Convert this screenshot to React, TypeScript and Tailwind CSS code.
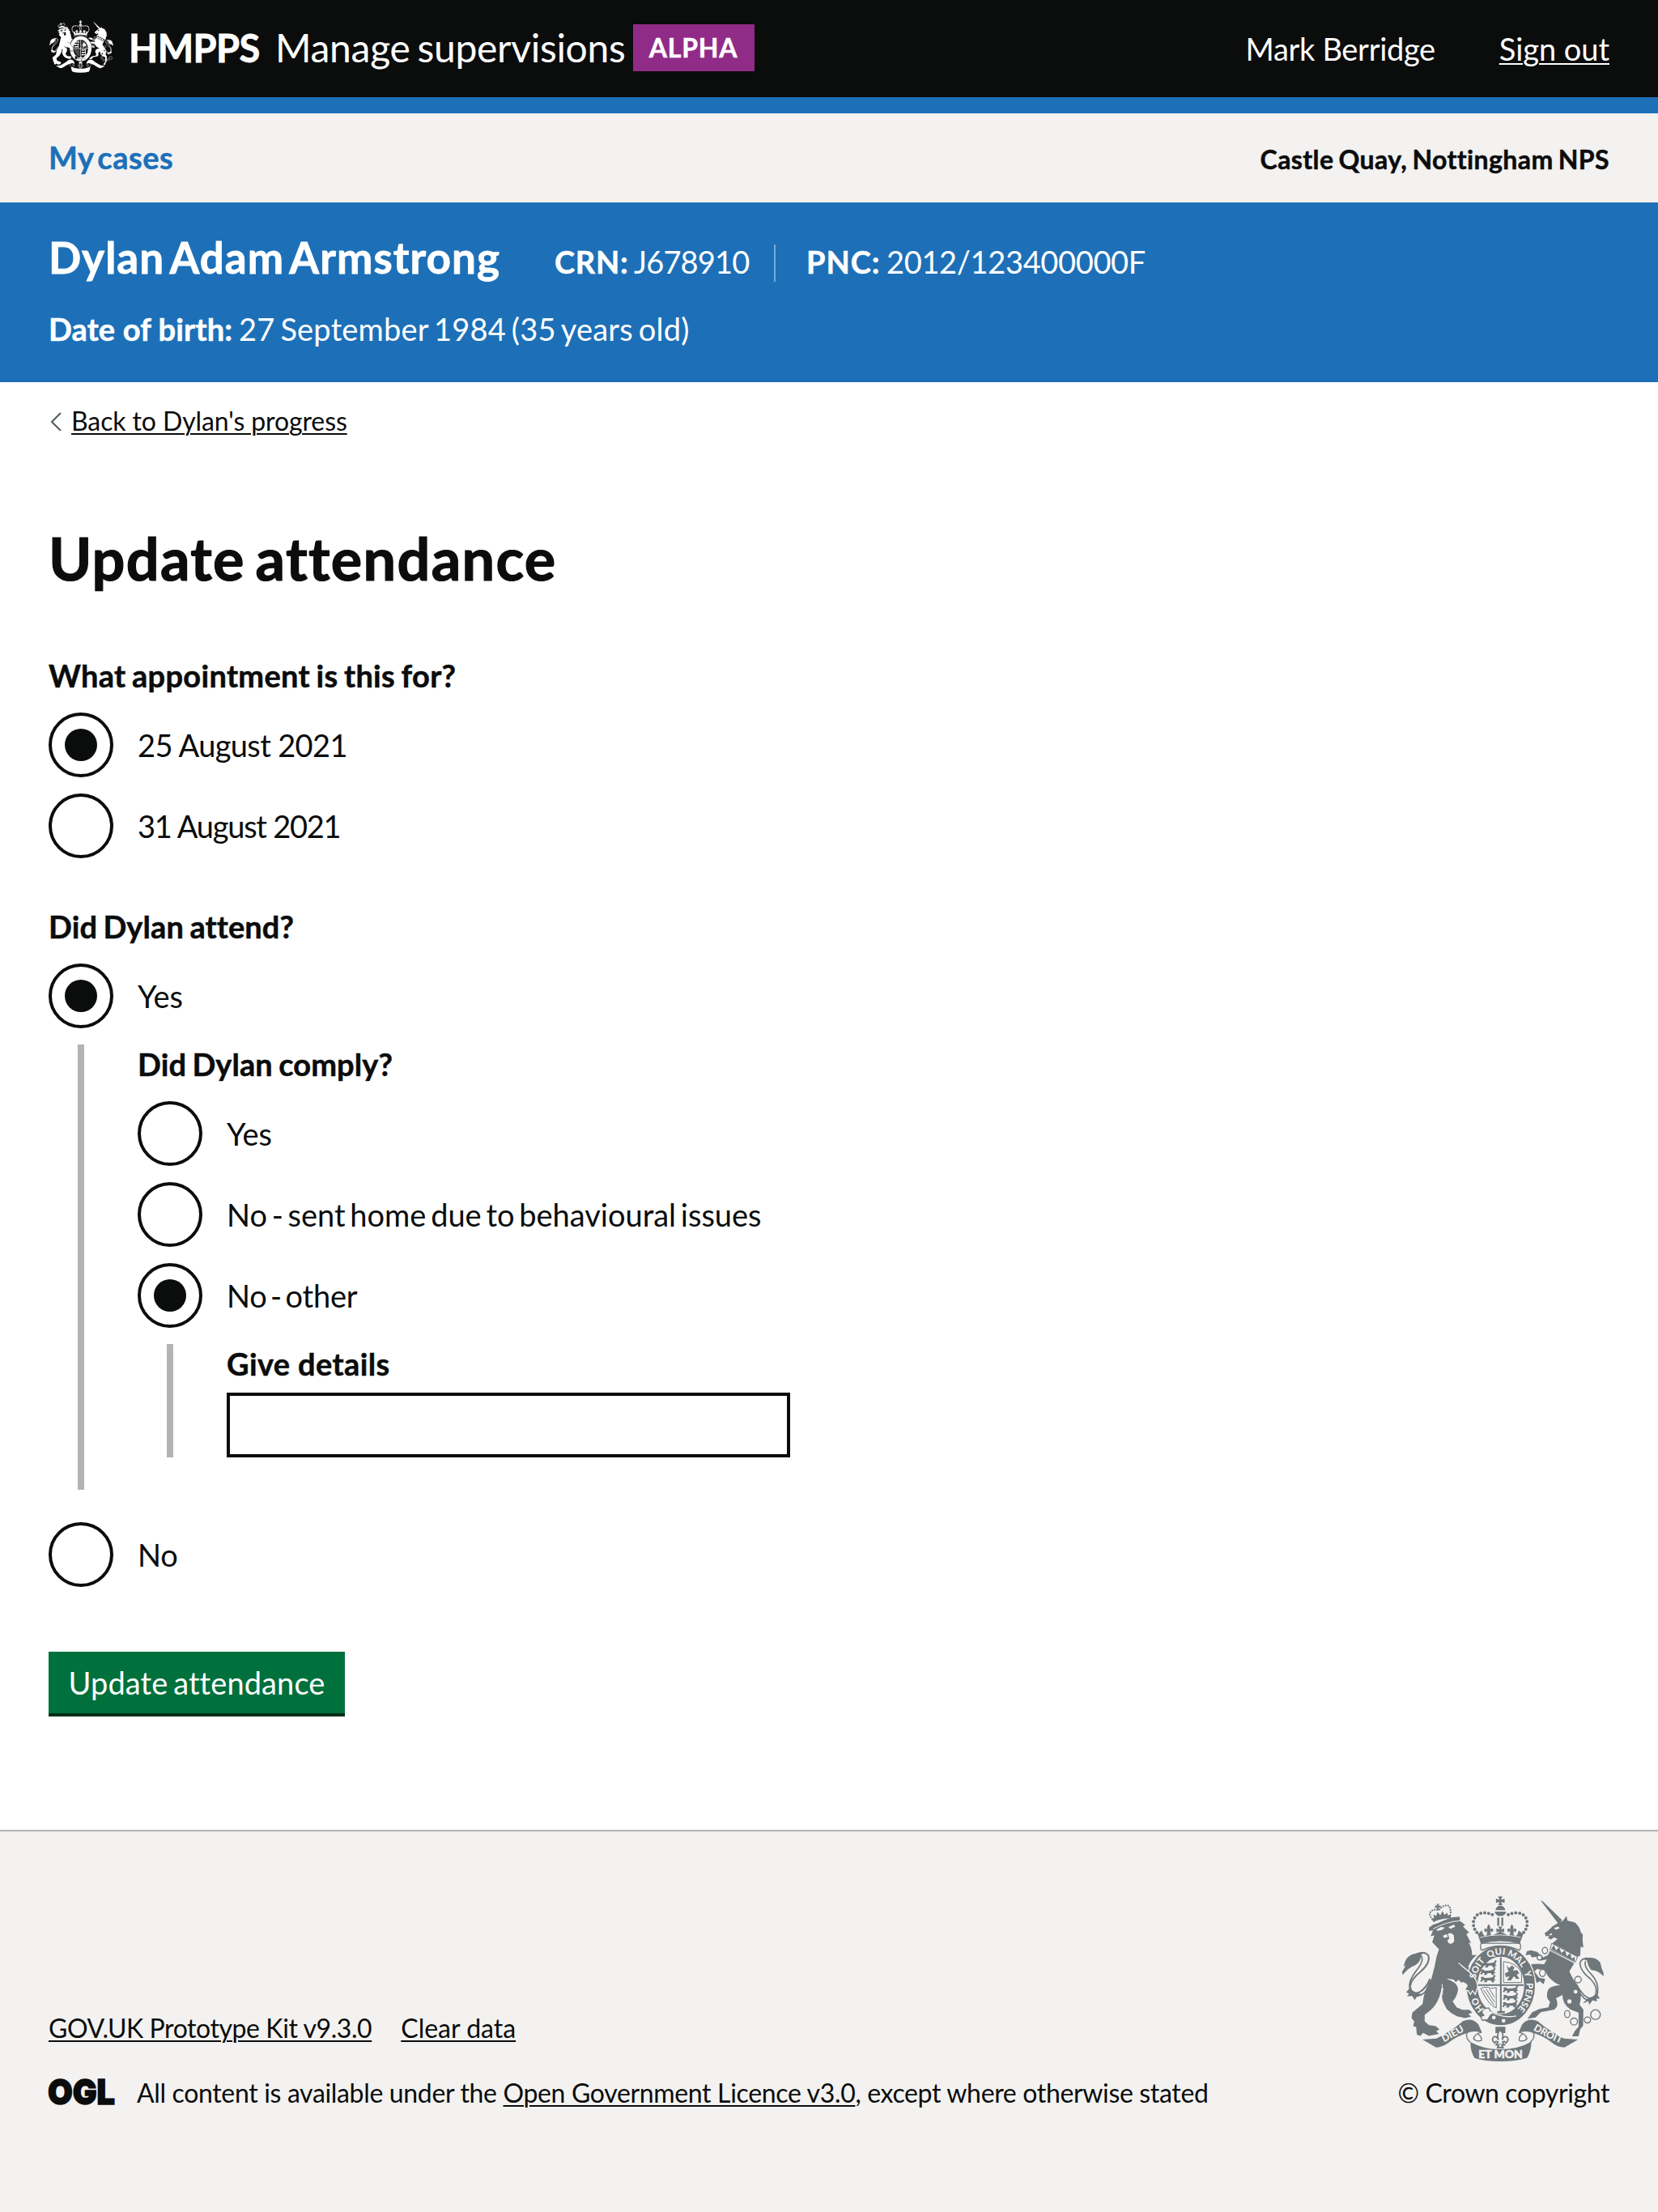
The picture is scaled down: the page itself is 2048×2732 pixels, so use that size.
import type { ReactNode } from "react";

function Fleur({ x, y, s }: { x: number; y: number; s: number }) {
  return (
    <path
      transform={`translate(${x} ${y}) scale(${s})`}
      d="M0-20Q9-9 4 3Q8-7 15-3Q20 4 12 10Q10 4 5 8L9 14H4L6 20H-6L-4 14H-9L-5 8Q-10 4-12 10Q-20 4-15-3Q-8-7-4 3Q-9-9 0-20Z"
    />
  );
}

function Cross({ x, y, s }: { x: number; y: number; s: number }) {
  return (
    <path
      transform={`translate(${x} ${y}) scale(${s})`}
      d="M-8-16H8L3-4L16-8V8L3 4L8 16H-8L-3 4L-16 8V-8L-3-4Z"
    />
  );
}

function Passant({ x, y }: { x: number; y: number }) {
  return (
    <path
      transform={`translate(${x} ${y})`}
      d="M-30-8L-22-11L-14-6L4-7L16-10L20-18L26-14L20-4L26 2L18 4L22 10H12L8 3L-4 3L-8 10H-18L-14 3L-22 2L-26 9L-32 5L-27-1Z"
    />
  );
}

const ribbonEnd =
  "M172 598L224 594Q285 562 322 529Q358 515 380 542L393 572Q362 562 338 574Q300 585 268 610Q248 627 222 627Z";
const ribbonFold = "M338 572Q330 592 350 608M391 571Q366 576 362 594Q370 606 390 602Q394 586 378 578";

function RoyalArms({ className, ink, ground, motto }: { className: string; ink: string; ground: string; motto?: boolean }) {
  return (
    <svg className={className} viewBox="95 65 752 614" fill={ink} aria-hidden="true">
      {/* ribbon */}
      <path d={ribbonEnd} />
      <path d={ribbonFold} fill="none" stroke={ink} strokeWidth="4" />
      <g transform="matrix(-1 0 0 1 922 0)">
        <path d={ribbonEnd} />
        <path d={ribbonFold} fill="none" stroke={ink} strokeWidth="4" />
      </g>
      <path d="M350 607Q400 635 461 634Q528 634 577 605Q575 645 560 666Q516 679 461 679Q404 679 366 667Q350 645 350 607Z" />

      {/* lion */}
      <path d="M196 182L212 170L226 166L262 151L284 143L310 141L311 157L331 172L322 177L345 200L335 206L353 240L343 236Q357 260 356 284L374 283Q352 300 342 326L354 348Q372 372 375 400L366 426L357 413L350 425L343 414L333 413L340 398L330 388L322 380L318 388L306 376L296 384L286 374L268 372L262 373Q300 384 304 408Q303 435 284 456L299 478L320 487L346 487L357 498L342 503L353 513L330 518L300 511L280 500L262 485L248 458Q240 435 250 408L243 405Q235 460 200 490L180 506L180 530L196 544L220 547L235 560L223 567L233 577L196 584L174 573L164 584L151 580L148 551L137 548L141 530L131 518L134 498L150 484L172 466Q178 408 205 372L216 330L224 290L233 262L208 236L216 210L202 214L211 192L196 194Z" />
      <g fill={ground}>
        <path d="M222 190L240 179L256 182L244 190L230 194ZM268 180L288 170L294 178L276 186Z" />
        <path d="M266 206Q278 196 288 210L290 232Q280 248 268 238L264 228L272 222Z" />
        <path d="M248 212L262 206L266 216L252 220Z" />
      </g>
      <path fill="none" stroke={ground} strokeWidth="3" d="M245 392L246 430M212 186Q260 160 312 156" />
      <path d="M207 150Q240 130 276 136L279 147Q240 146 212 161Z" />
      <path fill="none" stroke={ink} strokeWidth="7" strokeLinecap="round" strokeDasharray="0 9.5" d="M208 150Q190 128 208 118Q220 112 232 118Q246 98 266 99Q280 108 275 136" />
      <Cross x={229} y={104} s={0.65} />
      <path d="M214 146L213 132L222 139L228 124L238 136L246 120L254 134L264 126L266 140Z" />
      <path fill="none" stroke={ink} strokeWidth="6" d="M150 280Q180 268 194 286Q202 312 165 345Q128 375 126 400Q130 432 160 422Q185 408 200 372" />
      <path fill="none" stroke={ink} strokeWidth="5" d="M164 284Q182 300 150 340Q118 380 124 410Q134 440 166 432Q190 420 204 385" />
      <path d="M176 275Q122 274 108 306L101 326L110 322L96 346L98 358Q120 330 146 321Q166 308 166 285Z" />
      <path d="M124 408L111 422L122 427L114 437L133 436L143 451L150 440L176 430L148 425Z" />

      {/* unicorn */}
      <path d="M611 81L618 83L691 154L677 167Z" />
      <path d="M707 139L711 156L738 162Q758 180 760 198L768 208L767 228L770 256L760 252L758 286L746 291L700 264L654 240L674 224L660 218L650 226L638 220L643 212L630 214L626 202L640 192L656 176L680 162L694 156Z" />
      <path fill={ground} d="M660 183L676 178L682 184L668 190ZM640 208L654 202L652 210Z" />
      <path fill={ground} stroke={ink} strokeWidth="3" d="M652 240L748 290L740 310L646 264Z" />
      <path d="M650 262L660 246L668 266L680 254L688 276L702 266L708 288L722 276L726 297L738 290L737 307Z" />
      <path d="M646 268L736 314L718 344Q732 378 750 396Q768 426 756 468L770 486L769 546L758 560L752 586L728 586L738 566L752 550L752 498L722 486Q692 466 692 432L668 444Q682 472 662 486L612 496L592 516L562 520L580 496L606 484L640 478L646 458Q626 440 640 410Q656 396 684 396Q640 378 628 342L598 335L588 345L606 368L628 372L622 392L608 380L596 388L592 370L574 346L572 318L600 316L624 318L634 300L612 304L600 290L578 292L572 282L555 285L560 270L574 266L598 272L620 292L638 284Z" />
      <g fill={ground} stroke={ink} strokeWidth="4">
        <ellipse cx="627" cy="267" rx="10" ry="12" />
        <circle cx="607" cy="293" r="9" />
        <ellipse cx="618" cy="350" rx="11" ry="13" />
        <circle cx="750" cy="375" r="12" />
        <circle cx="741" cy="420" r="9" />
        <circle cx="718" cy="456" r="10" />
        <ellipse cx="710" cy="503" rx="10" ry="13" />
        <circle cx="735" cy="531" r="13" />
        <ellipse cx="785" cy="525" rx="12" ry="11" />
        <circle cx="815" cy="505" r="18" />
      </g>
      <path fill="none" stroke={ink} strokeWidth="5" d="M790 296Q762 292 757 315Q760 345 796 372Q825 402 816 430Q800 458 770 430L750 404M778 306Q770 326 800 356Q828 385 823 425Q808 462 774 446L756 424" />
      <path d="M766 298Q812 284 833 312L837 330L845 350V362Q822 340 800 340Q786 326 784 304Z" />
      <path d="M822 430L831 445L818 446L821 456L804 452L792 468L788 455L768 464L782 448Z" />

      {/* garter and shield */}
      <ellipse cx="463" cy="397" rx="131" ry="152" fill={ground} />
      <ellipse cx="463" cy="397" rx="107" ry="127" fill={ground} stroke={ink} strokeWidth="40" />
      <path d="M460 292H466V392H548V398H466V492H478V500H450V492H460V398H375V392H460Z" />
      <Passant x={422} y={320} />
      <Passant x={418} y={348} />
      <Passant x={418} y={375} />
      <Passant x={502} y={414} />
      <Passant x={502} y={442} />
      <Passant x={500} y={469} />
      <path fill="none" stroke={ink} strokeWidth="3" d="M473 308V386H540V350Q522 312 473 308Z" />
      <path d="M484 322L494 332L504 322L514 330L508 342L524 340L532 352L522 356L532 372H520L512 362L500 378H486L496 362L482 366L478 352L492 346Z" />
      <path fill="none" stroke={ink} strokeWidth="3" d="M388 408Q410 398 426 408L446 405V480Q420 474 388 408ZM398 412L438 470M408 409L440 458M420 410L440 440" />
      {/* forepaw resting on the garter */}
      <path stroke={ground} strokeWidth="4" d="M308 316Q345 345 356 356Q376 378 377 402L368 430L358 416L350 430L342 416L328 414L338 398L318 372Z" />
      <path d="M290 318L310 318L342 362L342 392L318 382Z" />
      {/* buckle and strap */}
      <path fill={ground} stroke={ink} strokeWidth="4" d="M398 484L418 480L424 492L436 500L424 508L414 524L394 526L388 512L400 508L392 496Z" />
      <circle cx="437" cy="516" r="7" fill={ground} />
      <circle cx="473" cy="528" r="7" fill={ground} />
      <path fill="none" stroke={ground} strokeWidth="4" d="M425 494Q470 520 520 510" />
      <path d="M443 550H480V574H470L461 566L452 574H443Z" />
      <g fill={ground} stroke={ink} strokeWidth="3">
        <Fleur x={461} y={594} s={1.7} />
        <circle cx="461" cy="621" r="6" />
      </g>

      {/* crown */}
      <path fill={ground} stroke={ink} strokeWidth="4" d="M390 240Q384 258 392 266Q461 234 532 266Q540 256 534 240Z" />
      <Cross x={461} y={82} s={1} />
      <path d="M443 117Q446 100 461 100Q477 100 480 117ZM440 122H483Q480 138 461 139Q443 138 440 122ZM450 144H457V175H450ZM465 144H472V175H465Z" />
      <g fill="none" stroke={ink} strokeWidth="12" strokeLinecap="round" strokeDasharray="0 14.6">
        <path d="M374 200C350 172 360 128 398 127Q418 126 436 136" />
        <path d="M548 200C572 172 562 128 524 127Q504 126 486 136" />
      </g>
      <path d="M372 190L380 204L392 192L398 208L406 214L418 198L430 212L442 206L461 196L480 206L492 212L504 198L516 214L524 208L530 192L544 204L552 190L533 242Q461 222 389 242Z" />
      <Fleur x={418} y={189} s={1} />
      <Fleur x={504} y={189} s={1} />
      <Cross x={461} y={192} s={0.9} />
      <path fill="none" stroke={ground} strokeWidth="2.5" d="M386 218Q461 200 537 218" />

      {motto && (
        <g fill={ground} fontFamily="Lato, sans-serif" fontWeight="900" fontSize="34" textAnchor="middle">
          <path id="garter-line" fill="none" d="M463 512A95 115 0 0 1 463 282A95 115 0 0 1 463 512" />
          <path id="dieu-line" fill="none" d="M234 616Q290 590 344 555" />
          <path id="droit-line" fill="none" d="M566 551Q630 592 704 620" />
          <text><textPath href="#garter-line" startOffset="14.5%">HO</textPath></text>
          <text><textPath href="#garter-line" startOffset="34.5%">SOIT</textPath></text>
          <text><textPath href="#garter-line" startOffset="47.5%">QUI</textPath></text>
          <text><textPath href="#garter-line" startOffset="59%">MAL</textPath></text>
          <text><textPath href="#garter-line" startOffset="69%">Y</textPath></text>
          <text><textPath href="#garter-line" startOffset="81.5%">PENSE</textPath></text>
          <text fontSize="37"><textPath href="#dieu-line" startOffset="50%">DIEU</textPath></text>
          <text fontSize="37"><textPath href="#droit-line" startOffset="50%">DROIT</textPath></text>
          <text x="462" y="668" fontSize="42" stroke={ground} strokeWidth="1.5">ET MON</text>
        </g>
      )}
    </svg>
  );
}

function Radio({ label, checked, tracking }: { label: string; checked?: boolean; tracking: string }) {
  return (
    <label className="flex h-20 items-center">
      <span className="flex size-20 items-center justify-center rounded-full border-4 border-[#0b0c0c]">
        {checked && <span className="size-10 rounded-full bg-[#0b0c0c]" />}
      </span>
      <span className={`ml-[30px] leading-[40px] ${tracking}`}>{label}</span>
    </label>
  );
}

function Question({ children, tracking }: { children: ReactNode; tracking: string }) {
  return <h2 className={`h-10 font-bold leading-[42px] [-webkit-text-stroke:0.5px] ${tracking}`}>{children}</h2>;
}

const link = "underline decoration-2 underline-offset-[3px]";

export default function App() {
  return (
    <div className="flex h-[2732px] w-[2048px] flex-col whitespace-nowrap bg-white font-[Lato,sans-serif] text-[38px] text-[#0b0c0c]">
      <header className="flex h-[140px] items-start border-b-20 border-[#1d70b8] bg-[#0b0c0c] px-[60px] text-white">
        <RoyalArms className="mt-6 ml-px h-[67px] w-[79px] shrink-0" ink="#ffffff" ground="#0b0c0c" />
        <span className="mt-[29px] ml-[19px] w-[181px] text-[47px] font-bold leading-[60px] tracking-[-0.55px] [-webkit-text-stroke:0.8px]">HMPPS</span>
        <span className="mt-[29px] w-[442px] text-[48px] leading-[60px] tracking-[-0.3px] [word-spacing:-3px]">Manage supervisions</span>
        <strong className="mt-[30px] h-[58px] w-[150px] bg-[#912b88] pr-px text-center text-[32px] leading-[57px] tracking-[0.8px] [-webkit-text-stroke:0.5px]">ALPHA</strong>
        <span className="mt-[30px] ml-auto leading-[60px] tracking-[-0.32px]">Mark Berridge</span>
        <a className={`mt-[30px] ml-[79px] leading-[60px] tracking-[-0.05px] ${link}`}>Sign out</a>
      </header>

      <nav className="flex h-[110px] items-baseline justify-between bg-[#f3f2f1] px-[60px] pt-8 font-bold [-webkit-text-stroke:0.5px]">
        <a className="leading-[44px] tracking-[0.5px] text-[#1d70b8] [word-spacing:-5px]">My cases</a>
        <span className="text-[32px] leading-[40px] tracking-[0.4px] [word-spacing:-2px]">Castle Quay, Nottingham NPS</span>
      </nav>

      <section className="h-[222px] bg-[#1d70b8] px-[60px] pt-[38px] text-white">
        <div className="flex h-[60px] items-baseline">
          <h2 className="w-[625px] text-[53px] font-bold leading-[60px] tracking-[1.05px] [-webkit-text-stroke:0.8px] [word-spacing:-6px]">Dylan Adam Armstrong</h2>
          <b className="w-[98px] leading-[42px] tracking-[0.72px] [-webkit-text-stroke:0.5px]">CRN:</b>
          <span className="w-[173px] leading-[42px] tracking-[-0.85px]">J678910</span>
          <b className="w-[139px] border-l-2 border-white/40 pb-1 pl-[38px] leading-[42px] tracking-[0.95px] [-webkit-text-stroke:0.5px]">PNC:</b>
          <span className="leading-[42px] tracking-[-0.35px]">2012/123400000F</span>
        </div>
        <div className="mt-[37px] flex leading-[42px]">
          <b className="w-[235px] tracking-[0.14px] [-webkit-text-stroke:0.5px]">Date of birth:</b>
          <span className="tracking-[0.2px] [word-spacing:-3px]">27 September 1984 (35 years old)</span>
        </div>
      </section>

      <main className="px-[60px]">
        <a className="mt-7 flex h-10 items-center text-[32px] leading-[42px] tracking-[-0.1px]">
          <svg className="mr-3 ml-0.5 h-6 w-3.5" viewBox="0 0 14 24" fill="none" stroke="#505a5f" strokeWidth="2">
            <path d="M13 2L2 13L13 24" />
          </svg>
          <span className={link}>Back to Dylan's progress</span>
        </a>

        <h1 className="mt-[108px] h-20 text-[72px] font-bold leading-[82px] tracking-[1.3px] [-webkit-text-stroke:1.2px] [word-spacing:-6px]">Update attendance</h1>

        <div className="mt-[85px]">
          <Question tracking="tracking-[0.3px] [word-spacing:-2px]">What appointment is this for?</Question>
          <div className="mt-[27px] flex flex-col gap-5">
            <Radio label="25 August 2021" checked tracking="tracking-[-0.65px]" />
            <Radio label="31 August 2021" tracking="tracking-[-1.25px]" />
          </div>
        </div>

        <div className="mt-[63px]">
          <Question tracking="tracking-[0.12px] [word-spacing:-2px]">Did Dylan attend?</Question>
          <div className="mt-[27px]">
            <Radio label="Yes" checked tracking="tracking-[0px]" />
            <div className="mt-5 ml-9 border-l-8 border-[#b1b4b6] pt-[3px] pb-10 pl-[66px]">
              <Question tracking="tracking-[0.1px] [word-spacing:-2px]">Did Dylan comply?</Question>
              <div className="mt-[27px] flex flex-col gap-5">
                <Radio label="Yes" tracking="tracking-[0px]" />
                <Radio label="No - sent home due to behavioural issues" tracking="tracking-[0px] [word-spacing:-4px]" />
                <Radio label="No - other" checked tracking="tracking-[-0.2px] [word-spacing:-5px]" />
                <div className="ml-9 border-l-8 border-[#b1b4b6] pt-[3px] pl-[66px]">
                  <Question tracking="tracking-[0.38px]">Give details</Question>
                  <input className="mt-[17px] block h-20 w-[696px] border-4 border-[#0b0c0c]" />
                </div>
              </div>
            </div>
            <div className="mt-10">
              <Radio label="No" tracking="tracking-[-0.2px]" />
            </div>
          </div>
        </div>

        <button className="mt-20 block h-20 w-[366px] border-b-4 border-[#002d18] bg-[#00703c] leading-[76px] tracking-[0.1px] text-white [word-spacing:-3px]">
          Update attendance
        </button>
      </main>

      <footer className="mt-[140px] flex flex-1 items-start justify-between border-t-2 border-[#b1b4b6] bg-[#f3f2f1] px-[60px] pt-20 text-[32px] leading-[40px]">
        <div className="mt-[143px]">
          <div className="flex gap-9">
            <a className={`tracking-[-0.42px] ${link}`}>GOV.UK Prototype Kit v9.3.0</a>
            <a className={link}>Clear data</a>
          </div>
          <div className="mt-10 flex">
            <svg className="mt-px mr-[27px] h-[34px] w-[82px] overflow-visible" viewBox="0 0 82 34" fill="#0b0c0c" stroke="#0b0c0c" strokeWidth="1.5">
              <text x="-1" y="32.5" fontFamily="Inter, sans-serif" fontWeight="900" fontSize="43" textLength="83" lengthAdjust="spacingAndGlyphs">
                OGL
              </text>
            </svg>
            <p className="tracking-[-0.34px]">
              All content is available under the <a className={link}>Open Government Licence v3.0</a>, except where otherwise stated
            </p>
          </div>
        </div>
        <div className="flex flex-col items-end">
          <RoyalArms className="mr-[6px] h-[204px] w-[251px]" ink="#6f777b" ground="#f3f2f1" motto />
          <a className="mt-[19px] tracking-[-0.4px]">© Crown copyright</a>
        </div>
      </footer>
    </div>
  );
}
